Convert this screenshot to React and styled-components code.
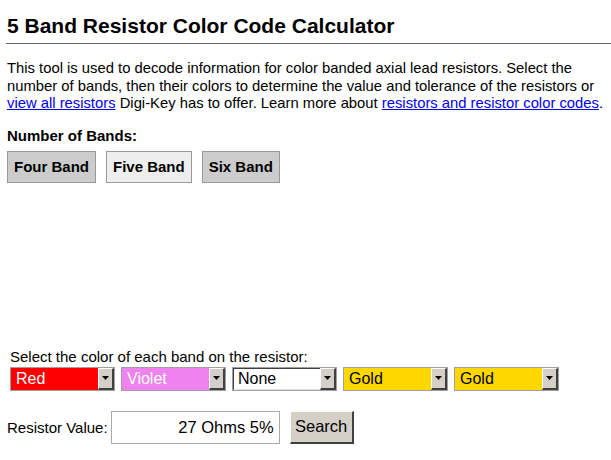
import React from "react";
import styled, { createGlobalStyle } from "styled-components";

const Global = createGlobalStyle`
  html, body { margin: 0; padding: 0; background: #fff; overflow-x: hidden; }
  body { font-family: Arial, "Liberation Sans", sans-serif; color: #000; }
`;

const Page = styled.div`
  padding: 0 0 0 7px;
  width: 604px;
`;

const Title = styled.h1`
  margin: 0;
  padding: 13px 0 0 0;
  font-size: 21px;
  font-weight: bold;
  line-height: 26px;
`;

const Rule = styled.hr`
  margin: 4px 0 0 -1px;
  border: 0;
  border-top: 1px solid #666;
  height: 0;
`;

const Intro = styled.p`
  margin: 16px 0 0 0;
  font-size: 14.8px;
  line-height: 17.5px;
  white-space: nowrap;
`;

const Link = styled.a`
  color: #0000ee;
  text-decoration: underline;
`;

const Label = styled.div`
  margin-top: 14px;
  font-size: 15px;
  font-weight: bold;
  line-height: 18px;
`;

const BandRow = styled.div`
  display: flex;
  gap: 10px;
  margin-top: 6px;
`;

const BandButton = styled.button`
  font-family: Arial, "Liberation Sans", sans-serif;
  font-size: 15px;
  font-weight: bold;
  height: 32px;
  padding: 0 6px;
  border: 1px solid #999;
  background: ${(p) => (p.$active ? "#eee" : "#ccc")};
  color: #000;
  margin: 0;
`;

const Spacer = styled.div`
  height: 165px;
`;

const BandSection = styled.div`
  padding-left: 3px;
`;

const Prompt = styled.div`
  font-size: 15px;
  line-height: 18px;
`;

const SelectRow = styled.div`
  display: flex;
  gap: 6px;
  margin-top: 1px;
`;

const SelectBox = styled.div`
  box-sizing: border-box;
  width: 105px;
  height: 24px;
  display: flex;
  align-items: stretch;
  border: 1px solid #a0a0a0;
  background: ${(p) => p.$bg};
`;

const SelectInner = styled.div`
  flex: 1;
  display: flex;
  align-items: stretch;
  border: 1px solid ${(p) => (p.$plain ? "#404040" : p.$bg)};
  border-right: 0;
  border-bottom-color: ${(p) => (p.$plain ? "#e0e0e0" : p.$bg)};
`;

const SelectText = styled.div`
  flex: 1;
  font-size: 16px;
  line-height: 20px;
  padding-left: 4px;
  color: ${(p) => p.$fg};
  overflow: hidden;
  white-space: nowrap;
`;

const Arrow = styled.div`
  width: 16px;
  box-sizing: border-box;
  background: #d4d0c8;
  border-top: 1px solid #fff;
  border-left: 1px solid #fff;
  border-right: 2px solid #404040;
  border-bottom: 2px solid #404040;
  display: flex;
  align-items: center;
  justify-content: center;
`;

const ValueRow = styled.div`
  display: flex;
  align-items: center;
  margin-top: 20px;
`;

const ValueLabel = styled.span`
  font-size: 15px;
  margin-right: 3px;
`;

const ValueInput = styled.div`
  box-sizing: border-box;
  width: 169px;
  height: 33px;
  border: 1px solid #a9a9a9;
  font-size: 16.5px;
  line-height: 31px;
  text-align: right;
  padding-right: 5px;
`;

const SearchButton = styled.button`
  margin-left: 10px;
  box-sizing: border-box;
  height: 33px;
  width: 64px;
  padding: 0;
  font-family: Arial, "Liberation Sans", sans-serif;
  font-size: 16.5px;
  color: #000;
  background: #d4d0c8;
  border-top: 1px solid #fff;
  border-left: 1px solid #fff;
  border-right: 2px solid #404040;
  border-bottom: 2px solid #404040;
`;

const bands = [
  { label: "Red", bg: "#ff0000", fg: "#fff" },
  { label: "Violet", bg: "#ee82ee", fg: "#fff" },
  { label: "None", bg: "#fff", fg: "#000", plain: true },
  { label: "Gold", bg: "#ffd700", fg: "#000" },
  { label: "Gold", bg: "#ffd700", fg: "#000" },
];

function DropArrow() {
  return (
    <svg width="7" height="4" viewBox="0 0 7 4">
      <path d="M0 0h7L3.5 4z" fill="#000" />
    </svg>
  );
}

export default function App() {
  return (
    <>
      <Global />
      <Page>
        <Title>5 Band Resistor Color Code Calculator</Title>
        <Rule />
        <Intro>
          This tool is used to decode information for color banded axial lead resistors. Select the
          <br />
          number of bands, then their colors to determine the value and tolerance of the resistors or
          <br />
          <Link href="#">view all resistors</Link> Digi-Key has to offer. Learn more about{" "}
          <Link href="#">resistors and resistor color codes</Link>.
        </Intro>
        <Label>Number of Bands:</Label>
        <BandRow>
          <BandButton>Four Band</BandButton>
          <BandButton $active>Five Band</BandButton>
          <BandButton>Six Band</BandButton>
        </BandRow>
        <Spacer />
        <BandSection>
          <Prompt>Select the color of each band on the resistor:</Prompt>
          <SelectRow>
            {bands.map((b, i) => (
              <SelectBox key={i} $bg={b.bg}>
                <SelectInner $bg={b.bg} $plain={b.plain}>
                  <SelectText $fg={b.fg}>{b.label}</SelectText>
                </SelectInner>
                <Arrow>
                  <DropArrow />
                </Arrow>
              </SelectBox>
            ))}
          </SelectRow>
        </BandSection>
        <ValueRow>
          <ValueLabel>Resistor Value:</ValueLabel>
          <ValueInput>27 Ohms 5%</ValueInput>
          <SearchButton>Search</SearchButton>
        </ValueRow>
      </Page>
    </>
  );
}
